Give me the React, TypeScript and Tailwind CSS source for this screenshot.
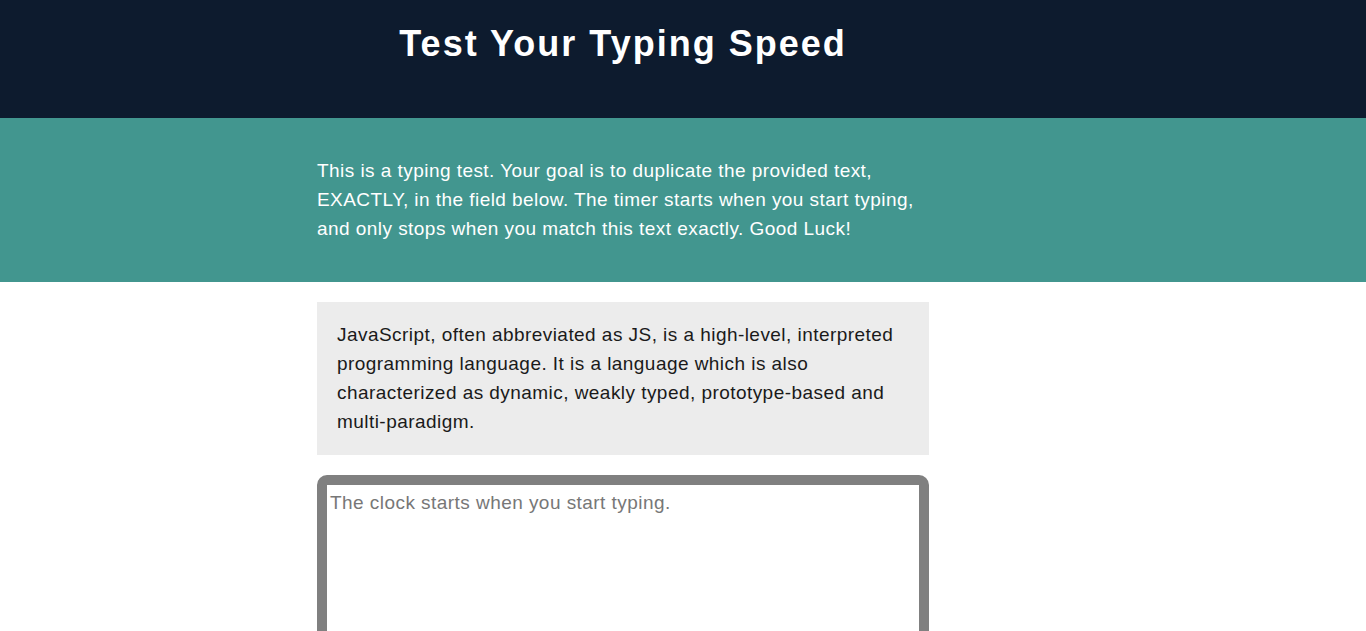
export default function App() {
  return (
    <div className="min-h-screen bg-white font-['Liberation_Sans',Arial,sans-serif]">
      <header className="h-[118px] bg-[#0d1b2e] pt-[23px]">
        <div className="ml-[317px] w-[612px] text-center">
          <h1 className="text-[36px] font-bold leading-[1.15] tracking-[2px] text-white">Test Your Typing Speed</h1>
        </div>
      </header>

      <section className="h-[164px] bg-[#42968f] pt-[38px]">
        <p className="ml-[317px] w-[612px] text-[19px] leading-[29px] tracking-[0.45px] text-white">
          This is a typing test. Your goal is to duplicate the provided text, EXACTLY, in the field below. The timer starts when you start typing, and only stops when you match this text exactly. Good Luck!
        </p>
      </section>

      <main className="ml-[317px] flex w-[612px] flex-col gap-5 pt-5">
        <div className="bg-[#ececec] px-5 pt-[18px] pb-[19px] text-[19px] leading-[29px] tracking-[0.45px] text-[#1a1a1a]">
          JavaScript, often abbreviated as JS, is a high-level, interpreted programming language. It is a language which is also characterized as dynamic, weakly typed, prototype-based and multi-paradigm.
        </div>

        <textarea
          rows={6}
          placeholder="The clock starts when you start typing."
          className="h-[220px] w-full resize-none rounded-[10px] border-[10px] border-[#808080] bg-white pt-[4px] pl-[3px] pr-[3px] text-[19px] tracking-[0.45px] text-[#222] placeholder:text-[#777] focus:outline-none"
        />
      </main>
    </div>
  );
}
